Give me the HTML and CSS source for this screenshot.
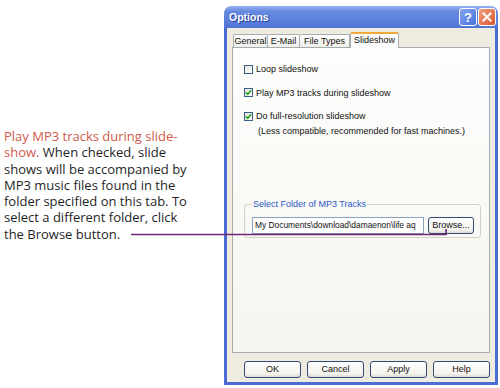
FILE: index.html
```html
<!DOCTYPE html>
<html lang="en">
<head>
  <meta charset="UTF-8" />
  <title>Options – Slideshow</title>
  <link rel="stylesheet" href="styles.css">
</head>
<body>
  <div class="page">
    <p class="callout">
      <span class="callout-lead">Play MP3 tracks during slide-<br>show.</span> When checked, slide<br>
      shows will be accompanied by<br>
      MP3 music files found in the<br>
      folder specified on this tab. To<br>
      select a different folder, click<br>
      the Browse button.
    </p>

    <div class="window">
      <div class="titlebar">
        <span class="title">Options</span>
        <span class="title-btn help-btn">?</span>
        <span class="title-btn close-btn">
          <svg width="10" height="10" viewBox="0 0 10 10"><path d="M1.5 1.5L8.5 8.5M8.5 1.5L1.5 8.5" stroke="#fff" stroke-width="2" stroke-linecap="square"/></svg>
        </span>
      </div>

      <div class="dialog">
        <div class="tabs">
          <span class="tab tab-general">General</span>
          <span class="tab tab-email">E-Mail</span>
          <span class="tab tab-types">File Types</span>
          <span class="tab tab-show active">Slideshow</span>
        </div>

        <div class="panel">
          <label class="check-row"><span class="box"></span>Loop slideshow</label>
          <label class="check-row"><span class="box checked"><svg width="7" height="7" viewBox="0 0 7 7"><path d="M0.8 3.4L2.7 5.3L6.2 1.2" fill="none" stroke="#21a121" stroke-width="1.6"/></svg></span>Play MP3 tracks during slideshow</label>
          <label class="check-row"><span class="box checked"><svg width="7" height="7" viewBox="0 0 7 7"><path d="M0.8 3.4L2.7 5.3L6.2 1.2" fill="none" stroke="#21a121" stroke-width="1.6"/></svg></span>Do full-resolution slideshow</label>
          <div class="note">(Less compatible, recommended for fast machines.)</div>

          <fieldset class="group">
            <legend>Select Folder of MP3 Tracks</legend>
            <div class="folder-row">
              <span class="field">My Documents\download\damaenon\life aq</span>
              <span class="btn browse-btn">Browse...</span>
            </div>
          </fieldset>
        </div>

        <div class="actions">
          <span class="btn">OK</span>
          <span class="btn">Cancel</span>
          <span class="btn">Apply</span>
          <span class="btn">Help</span>
        </div>
      </div>
    </div>
  </div>

  <!-- leader line from the caption to the Browse button -->
  <svg class="leader" width="500" height="388" viewBox="0 0 500 388">
    <polyline points="131,234.5 446,234.5 446,229" fill="none" stroke="#6e2776" stroke-width="1.6"/>
  </svg>
</body>
</html>
```

FILE: styles.css
```css
/* ——— page ——— */
body { margin: 0; background: #fff; font-family: "Liberation Sans", Arial, sans-serif; }
.page { display: flex; align-items: flex-start; width: 500px; height: 388px; overflow: hidden; }

.callout {
  flex: 0 0 224px; box-sizing: border-box; margin: 0; padding: 128px 0 0 4px;
  font-family: "Open Sans", sans-serif; font-size: 13px; line-height: 16.3px;
  color: #1f1f1f; white-space: nowrap;
}
.callout-lead { color: #cf5a4c; }

.leader { position: absolute; left: 0; top: 0; pointer-events: none; }

/* ——— XP window ——— */
.window { width: 274px; height: 379px; margin-top: 6px; display: flex; flex-direction: column; }
.titlebar {
  height: 22px; display: flex; align-items: center; gap: 1px; padding: 0 2px 0 5px;
  border-radius: 7px 7px 0 0;
  background: linear-gradient(#97b2ee, #6689e0 25%, #5a7edb 70%, #5074d4);
}
.title { flex: 1; color: #fff; font-weight: bold; font-size: 10.5px; text-shadow: 1px 1px 0 #24409a; }
.title-btn {
  width: 16px; height: 16px; border: 1px solid #fff; border-radius: 3px;
  display: flex; align-items: center; justify-content: center;
  color: #fff; font-weight: bold; font-size: 13px;
}
.help-btn { background: linear-gradient(135deg, #86a8ef, #4670dc); }
.close-btn { background: linear-gradient(135deg, #f2a07e, #da552f); }

.dialog {
  flex: 1; display: flex; flex-direction: column; padding: 4px 5px 0;
  background: #eeece0; border: 3px solid #4a6bd1; border-top: 0;
}

/* ——— tabs ——— */
.tabs { display: flex; align-items: flex-end; height: 15px; padding-left: 1px; }
.tab {
  box-sizing: border-box; height: 13px; font-size: 9px; line-height: 12px; text-align: center; color: #111;
  border: 1px solid #a7adb0; border-bottom: 0; border-radius: 2px 2px 0 0;
  background: linear-gradient(#fff, #efeee8);
}
.tab-general { width: 35px; }
.tab-email { width: 32px; border-left: 0; }
.tab-types { width: 50px; border-left: 0; }
.tab-show { width: 49px; }
.tab.active {
  height: 16px; margin-bottom: -1px; position: relative; z-index: 1; line-height: 13px;
  background: #fbfbf9; border-top: 2px solid #f0a83a; border-color: #f0a83a #a7adb0 #fbfbf9;
}

.panel {
  box-sizing: border-box; width: 258px; height: 306px; padding: 15px 9px 0 11px;
  border: 1px solid #a3abae; background: linear-gradient(#fdfdfc, #f6f5f0);
  font-size: 9px; color: #111;
}
.check-row { display: flex; align-items: center; gap: 3px; height: 12px; margin-bottom: 11.5px; }
.check-row:nth-of-type(3) { margin-bottom: 4px; }
.box {
  box-sizing: border-box; width: 9px; height: 9px; border: 1px solid #3a5f86;
  background: linear-gradient(135deg, #e4e3dc, #fff);
  display: flex; align-items: center; justify-content: center;
}
.note { padding-left: 14px; line-height: 11px; }

.group {
  margin: 62px 0 0; padding: 7px 6px 3px 7px; border: 1px solid #d4d2c4; border-radius: 3px;
}
.group legend { padding: 0 1px; color: #2c58c8; line-height: 11px; }
.folder-row { display: flex; gap: 4px; }
.field {
  box-sizing: border-box; width: 172px; height: 17px; padding: 0 2px; line-height: 15px;
  font-size: 8.4px; background: #fff; border: 1px solid #8ca3c0; overflow: hidden; white-space: nowrap;
}

/* ——— buttons ——— */
.btn {
  box-sizing: border-box; width: 57px; height: 17px; line-height: 15px; text-align: center;
  font-size: 9px; color: #111; border: 1px solid #334a74; border-radius: 3px;
  background: linear-gradient(#fff, #f3f2ec 80%, #dcd8cc);
}
.browse-btn { width: 46px; }
.actions { display: flex; justify-content: flex-end; gap: 6px; margin-top: 8px; }
```
